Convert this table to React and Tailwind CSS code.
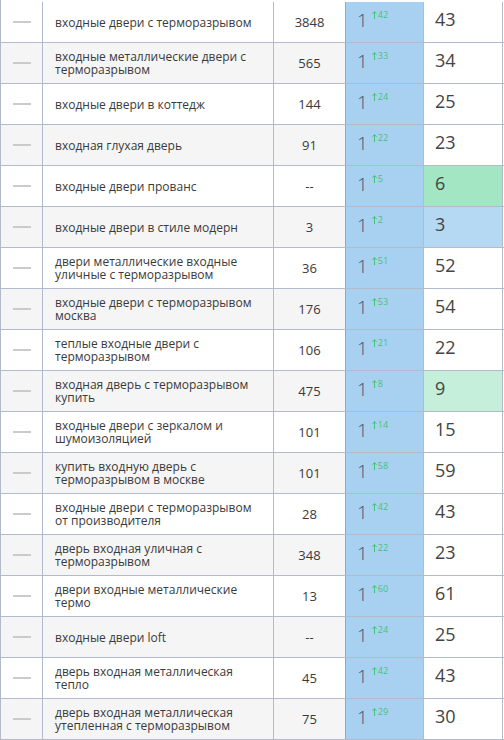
import React from "react";

const rows = [
  { q: "входные двери с терморазрывом", freq: "3848", d: 42, pos: 43 },
  { q: "входные металлические двери с терморазрывом", freq: "565", d: 33, pos: 34 },
  { q: "входные двери в коттедж", freq: "144", d: 24, pos: 25 },
  { q: "входная глухая дверь", freq: "91", d: 22, pos: 23 },
  { q: "входные двери прованс", freq: "--", d: 5, pos: 6, hl: "bg-[#a3e6c3]" },
  { q: "входные двери в стиле модерн", freq: "3", d: 2, pos: 3, hl: "bg-[#b6d9f3]" },
  { q: "двери металлические входные уличные с терморазрывом", freq: "36", d: 51, pos: 52 },
  { q: "входные двери с терморазрывом москва", freq: "176", d: 53, pos: 54 },
  { q: "теплые входные двери с терморазрывом", freq: "106", d: 21, pos: 22 },
  { q: "входная дверь с терморазрывом купить", freq: "475", d: 8, pos: 9, hl: "bg-[#c5efda]" },
  { q: "входные двери с зеркалом и шумоизоляцией", freq: "101", d: 14, pos: 15 },
  { q: "купить входную дверь с терморазрывом в москве", freq: "101", d: 58, pos: 59 },
  { q: "входные двери с терморазрывом от производителя", freq: "28", d: 42, pos: 43 },
  { q: "дверь входная уличная с терморазрывом", freq: "348", d: 22, pos: 23 },
  { q: "двери входные металлические термо", freq: "13", d: 60, pos: 61 },
  { q: "входные двери loft", freq: "--", d: 24, pos: 25 },
  { q: "дверь входная металлическая тепло", freq: "45", d: 42, pos: 43 },
  { q: "дверь входная металлическая утепленная с терморазрывом", freq: "75", d: 29, pos: 30 },
];

const Arrow = () => (
  <svg width="5" height="8" viewBox="0 0 5 8" className="inline-block mr-[1px]">
    <path d="M2.5 0.6 L2.5 8 M0.5 2.8 L2.5 0.6 L4.5 2.8" stroke="#45c27a" strokeWidth="1" fill="none" />
  </svg>
);

export default function App() {
  return (
    <div
      className="w-[504px] h-[740px] overflow-hidden bg-white border-l border-[#b3bbca]"
      style={{ fontFamily: '"Open Sans", "Noto Sans", sans-serif' }}
    >
      {rows.map((r, i) => {
        const stripe = i % 2 === 1 ? "bg-[#f5f5f5]" : "bg-white";
        return (
          <div
            key={i}
            className={`flex border-b border-[#b3bbca] ${i === 0 ? "h-[43px] pt-[2px]" : "h-[41px]"}`}
          >
            {/* dash */}
            <div className={`w-[42px] shrink-0 flex items-center justify-center border-r border-[#b3bbca] ${stripe}`}>
              <div className="w-[18px] h-[2px] bg-[#cbcbcb] ml-[1px]" />
            </div>
            {/* query */}
            <div className={`w-[231px] shrink-0 flex items-center pl-3 pr-4 border-r border-[#b3bbca] ${stripe}`}>
              <span className="text-[12px] leading-[13px] text-[#3a3a3a]">{r.q}</span>
            </div>
            {/* frequency */}
            <div className={`w-[72px] shrink-0 flex items-center justify-center border-r border-[#b3bbca] ${stripe}`}>
              <span className="text-[13px] text-[#3a3a3a] mt-[1px]">{r.freq}</span>
            </div>
            {/* position */}
            <div className="w-[79px] shrink-0 bg-[#a8d1f1] border-l border-[#8ea9c4] border-r border-r-[#b3bbca] -ml-[1px] pl-[11px] flex items-start pt-[7px]">
              <span className="text-[19px] leading-[22px] text-[#3b5574] font-light">1</span>
              <span className="text-[9px] leading-[10px] text-[#45c27a] ml-[4px] mt-[1px] flex items-center">
                <Arrow />
                {r.d}
              </span>
            </div>
            {/* previous */}
            <div className={`w-[79px] shrink-0 flex items-start pt-[6px] pl-[11px] border-r border-[#b3bbca] ${r.hl || "bg-white"}`}>
              <span className="text-[18px] leading-[22px] text-[#444]">{r.pos}</span>
            </div>
          </div>
        );
      })}
    </div>
  );
}
